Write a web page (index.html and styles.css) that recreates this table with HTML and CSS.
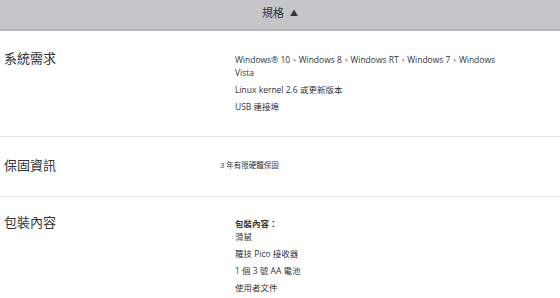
FILE: index.html
```html
<!DOCTYPE html>
<html lang="zh-Hant">
<head>
  <meta charset="UTF-8" />
  <title>規格</title>
  <link rel="stylesheet" href="styles.css">
</head>
<body>

<div class="specs-toggle">規格 <span class="arrow">▲</span></div>

<div class="specs">
  <!-- 系統需求 -->
  <div class="spec-row row-system">
    <div class="spec-title">系統需求</div>
    <div class="spec-body">
      <p>Windows® 10、Windows 8、Windows RT、Windows 7、Windows Vista</p>
      <p>Linux kernel 2.6 或更新版本</p>
      <p>USB 連接埠</p>
    </div>
  </div>

  <!-- 保固資訊 -->
  <div class="spec-row row-warranty">
    <div class="spec-title">保固資訊</div>
    <div class="spec-body small">
      <p>3 年有限硬體保固</p>
    </div>
  </div>

  <!-- 包裝內容 -->
  <div class="spec-row row-box">
    <div class="spec-title">包裝內容</div>
    <div class="spec-body">
      <p class="head"><strong>包裝內容：</strong><br>滑鼠</p>
      <p>羅技 Pico 接收器</p>
      <p>1 個 3 號 AA 電池</p>
      <p>使用者文件</p>
    </div>
  </div>
</div>

</body>
</html>
```

FILE: styles.css
```css
* {
  box-sizing: border-box;
}

body {
  margin: 0;
  background: #fff;
  font-family: 'Open Sans', 'Noto Sans CJK TC', sans-serif;
  color: #333;
}

.specs-toggle {
  background: #c4c6c8;
  border-bottom: 2px solid #b4b6b8;
  height: 31px;
  line-height: 25px;
  text-align: center;
  font-size: 11px;
  color: #333;
}

.specs-toggle .arrow {
  font-size: 8px;
  margin-left: 3px;
  vertical-align: 1px;
}

.spec-row {
  display: flex;
  border-bottom: 1px solid #e8e8e8;
}

.spec-title {
  width: 235px;
  flex-shrink: 0;
  padding-left: 4px;
  font-size: 13px;
  line-height: 18px;
  color: #333;
}

.spec-body {
  width: 262px;
  font-size: 8.5px;
  color: #333;
}

.spec-body p {
  margin: 0 0 4px;
  line-height: 13px;
}

.row-system {
  height: 106px;
  padding-top: 18px;
}

.row-system .spec-body {
  width: 272px;
  padding-top: 4px;
}

.row-warranty {
  height: 60px;
  padding-top: 19px;
}

.row-warranty .spec-body {
  margin-left: -15px;
  padding-top: 3px;
  font-size: 7.5px;
}

.row-box {
  padding-top: 16px;
  border-bottom: none;
}

.row-box .spec-body {
  padding-top: 4px;
}

.row-box .spec-body p.head {
  margin-bottom: 4px;
}
```
